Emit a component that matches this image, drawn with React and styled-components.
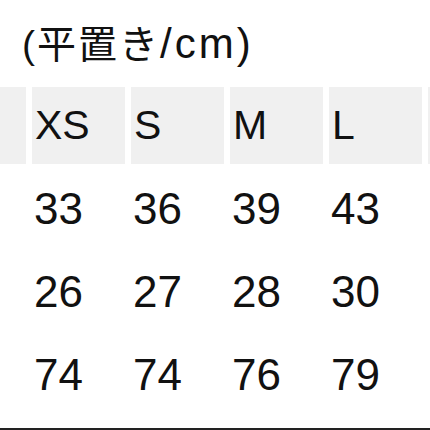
import React from "react";
import styled, { createGlobalStyle } from "styled-components";

const Global = createGlobalStyle`
  html, body { margin: 0; padding: 0; background: #fff; }
  body { width: 430px; height: 430px; overflow: hidden; }
`;

const Page = styled.div`
  width: 430px;
  height: 430px;
  overflow: hidden;
  box-sizing: border-box;
  border-bottom: 2px solid #222;
  display: flex;
  flex-direction: column;
`;

const Title = styled.div`
  font-family: "Liberation Sans", "Noto Sans CJK JP", sans-serif;
  font-size: 39px;
  line-height: 44px;
  height: 44px;
  letter-spacing: 2px;
  color: #111;
  margin: 22px 0 0 22px;
  white-space: nowrap;
`;

const Latin = styled.span`
  font-size: 42px;
  letter-spacing: 3px;
`;

const Table = styled.div`
  margin-top: 21px;
  display: grid;
  grid-template-columns: 26px repeat(5, 93px);
  grid-template-rows: 77px repeat(3, 83px);
  column-gap: 6px;
  width: 430px;
  overflow: hidden;
`;

const Cell = styled.div`
  font-family: "Liberation Sans", "Noto Sans CJK JP", sans-serif;
  font-size: ${(p) => (p.$head ? "41px" : "44px")};
  color: #111;
  display: flex;
  align-items: center;
  padding-left: ${(p) => (p.$head ? "3px" : "2px")};
  white-space: nowrap;
  overflow: hidden;
  background: ${(p) => (p.$head ? "#f0f0f0" : "#fff")};
  padding-top: ${(p) => (p.$head ? "0" : "6px")};
  box-sizing: border-box;
`;

const sizes = ["XS", "S", "M", "L"];
const rows = [
  ["33", "36", "39", "43"],
  ["26", "27", "28", "30"],
  ["74", "74", "76", "79"],
];

export default function App() {
  return (
    <>
      <Global />
      <Page>
        <Title>
          (平置き<Latin>/cm)</Latin>
        </Title>
        <Table>
          <Cell $head />
          {sizes.map((s) => (
            <Cell $head key={s}>{s}</Cell>
          ))}
          <Cell $head />
          {rows.map((r, i) => (
            <React.Fragment key={i}>
              <Cell />
              {r.map((v, j) => (
                <Cell key={j}>{v}</Cell>
              ))}
              <Cell />
            </React.Fragment>
          ))}
        </Table>
      </Page>
    </>
  );
}
